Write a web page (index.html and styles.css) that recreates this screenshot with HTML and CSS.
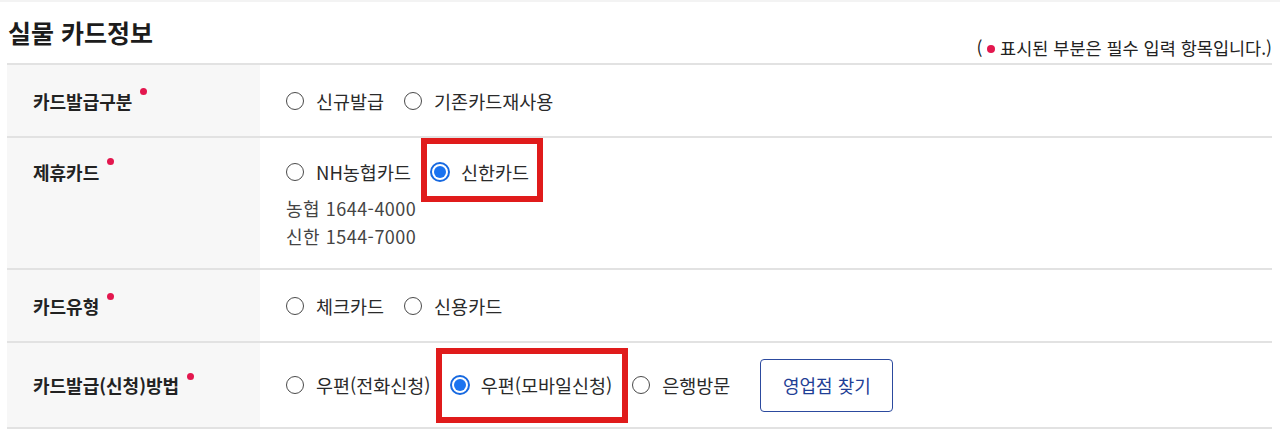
FILE: index.html
```html
<!DOCTYPE html>
<html lang="ko">

<head>
    <meta charset="UTF-8">
    <meta name="viewport" content="width=device-width, initial-scale=1.0">
    <title>실물 카드정보</title>
    <link rel="stylesheet" href="styles.css">
</head>

<body>

    <div class="page">
        <div class="head">
            <h2>실물 카드정보</h2>
            <p class="note">( <span class="dot"></span> 표시된 부분은 필수 입력 항목입니다.)</p>
        </div>

        <div class="form">
            <div class="row">
                <div class="label">카드발급구분<span class="req"></span></div>
                <div class="field">
                    <div class="options">
                        <label class="opt"><span class="radio"></span>신규발급</label>
                        <label class="opt"><span class="radio"></span>기존카드재사용</label>
                    </div>
                </div>
            </div>

            <div class="row row-top">
                <div class="label">제휴카드<span class="req"></span></div>
                <div class="field">
                    <div class="options">
                        <label class="opt"><span class="radio"></span>NH농협카드</label>
                        <label class="opt mark mark-card"><span class="radio on"></span>신한카드</label>
                    </div>
                    <div class="phones">
                        <p>농협 1644-4000</p>
                        <p>신한 1544-7000</p>
                    </div>
                </div>
            </div>

            <div class="row">
                <div class="label">카드유형<span class="req"></span></div>
                <div class="field">
                    <div class="options">
                        <label class="opt"><span class="radio"></span>체크카드</label>
                        <label class="opt"><span class="radio"></span>신용카드</label>
                    </div>
                </div>
            </div>

            <div class="row row-big">
                <div class="label">카드발급(신청)방법<span class="req"></span></div>
                <div class="field">
                    <div class="options">
                        <label class="opt"><span class="radio"></span>우편(전화신청)</label>
                        <label class="opt mark mark-post"><span class="radio on"></span>우편(모바일신청)</label>
                        <label class="opt"><span class="radio"></span>은행방문</label>
                        <button class="btn">영업점 찾기</button>
                    </div>
                </div>
            </div>
        </div>
    </div>

</body>

</html>
```

FILE: styles.css
```css
body {
    margin: 0;
    font-family: "Noto Sans CJK KR", "Noto Sans", sans-serif;
    color: #222;
    background: #fff;
    border-top: 2px solid #f3f3f3;
}

.page {
    padding: 0 8px 0 7px;
}

.head {
    display: flex;
    justify-content: space-between;
    align-items: flex-end;
    height: 61px;
}

.head h2 {
    margin: 0 0 14px 1px;
    font-size: 25px;
    line-height: 34px;
    font-weight: 700;
    color: #1c1c1c;
}

.note {
    margin: 0 0 4px;
    font-size: 17.5px;
    line-height: 22px;
    color: #222;
}

.dot {
    display: inline-block;
    width: 8px;
    height: 8px;
    border-radius: 50%;
    background: #e3174e;
    vertical-align: middle;
    margin: 0 0 3px;
}

.form {
    border-top: 2px solid #e2e2e2;
}

.row {
    display: flex;
    border-bottom: 2px solid #e2e2e2;
    min-height: 71px;
}

.row-big {
    min-height: 84px;
}

.label {
    width: 227px;
    flex-shrink: 0;
    background: #f7f7f7;
    padding-left: 26px;
    display: flex;
    align-items: center;
    font-size: 18px;
    font-weight: 700;
    color: #222;
}

.row-top .label {
    align-items: flex-start;
    padding-top: 20px;
    line-height: 28px;
}

.req {
    display: inline-block;
    width: 7px;
    height: 7px;
    border-radius: 50%;
    background: #e3174e;
    margin: 0 0 18px 8px;
}

.field {
    flex: 1;
    padding-left: 26px;
    display: flex;
    flex-direction: column;
    justify-content: center;
}

.row-top .field {
    justify-content: flex-start;
    padding-top: 20px;
    padding-bottom: 18px;
}

.options {
    display: flex;
    align-items: center;
    gap: 20px;
    height: 28px;
}

.opt {
    position: relative;
    display: flex;
    align-items: center;
    gap: 12px;
    font-size: 18.5px;
    line-height: 24px;
    color: #2a2a2a;
    white-space: nowrap;
}

.radio {
    width: 18px;
    height: 18px;
    border: 1.5px solid #4a4a4a;
    border-radius: 50%;
    box-sizing: border-box;
    position: relative;
    background: #fff;
}

.radio.on {
    width: 20px;
    height: 20px;
    margin: 0 -1px 0 -1px;
    border: 2px solid #1769e0;
}

.radio.on::after {
    content: "";
    position: absolute;
    inset: 2px;
    border-radius: 50%;
    background: #1a73f0;
}

/* red annotation boxes */
.mark::after {
    content: "";
    position: absolute;
    border: 6px solid #e01b1b;
}

.mark-card::after {
    left: -10px;
    right: -14px;
    top: -22px;
    bottom: -18px;
}

.mark-post::after {
    left: -15px;
    right: -16px;
    top: -25px;
    bottom: -26px;
}

.phones {
    margin-top: 8px;
}

.phones p {
    margin: 0;
    font-size: 18px;
    line-height: 28px;
    letter-spacing: 0.5px;
    color: #444;
}

.btn {
    margin-left: 10px;
    width: 133px;
    height: 53px;
    border: 1.5px solid #2c4a9e;
    border-radius: 4px;
    background: #fff;
    color: #1f3f96;
    font-family: inherit;
    font-size: 18px;
    cursor: pointer;
}
```
